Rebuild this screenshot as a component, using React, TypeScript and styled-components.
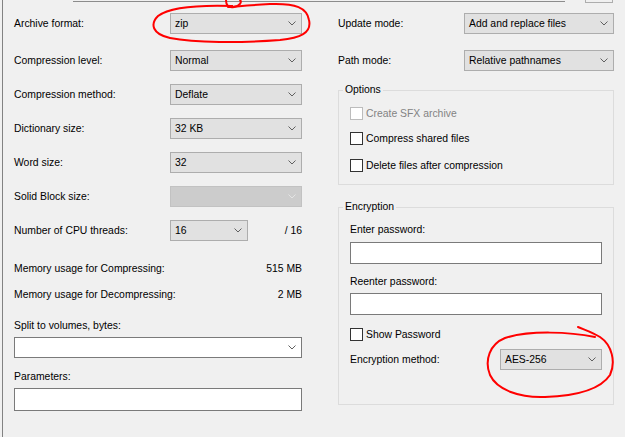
import React from "react";
import styled, { createGlobalStyle } from "styled-components";

const GlobalStyle = createGlobalStyle`
  html, body { margin: 0; padding: 0; background: #f0f0f0; }
  body {
    font-family: "Liberation Sans", Arial, sans-serif;
    font-size: 10.4px;
    color: #000;
  }
  #root { width: 625px; height: 437px; overflow: hidden; }
`;

const Page = styled.div`
  position: relative;
  width: 625px;
  height: 437px;
  overflow: hidden;
  background: #f0f0f0;
`;

const Frame = styled.div`
  margin-left: 2px;
  height: 100%;
  border-left: 1px solid #828282;
  box-sizing: border-box;
`;

const TopStrip = styled.div`
  display: flex;
  height: 3px;
  padding-left: 70px;
`;

const TopLine = styled.div`
  width: 492px;
  height: 0;
  margin-top: 1px;
  border-top: 1px solid #8c8c8c;
`;

const StubButton = styled.div`
  width: 28px;
  height: 3px;
  margin-left: 20px;
  box-sizing: border-box;
  border: 1px solid #adadad;
  border-top: none;
`;

const Columns = styled.div`
  display: flex;
  gap: 36px;
  padding-left: 11px;
`;

const Column = styled.div<{ $w: number }>`
  display: flex;
  flex-direction: column;
  width: ${(p) => p.$w}px;
  flex-shrink: 0;
`;

const Row = styled.div<{ $mt: number; $h?: number }>`
  display: flex;
  align-items: center;
  height: ${(p) => p.$h ?? 21}px;
  margin-top: ${(p) => p.$mt}px;
  white-space: nowrap;
`;

const Label = styled.div<{ $w?: number; $muted?: boolean }>`
  width: ${(p) => (p.$w ? `${p.$w}px` : "auto")};
  flex-shrink: 0;
  color: ${(p) => (p.$muted ? "#838383" : "#000")};
`;

const Spacer = styled.div`
  flex: 1;
`;

type ComboKind = "list" | "edit" | "disabled";

const ComboBox = styled.div<{ $w: number; $h?: number; $kind?: ComboKind }>`
  display: flex;
  align-items: center;
  justify-content: space-between;
  width: ${(p) => p.$w}px;
  height: ${(p) => p.$h ?? 21}px;
  box-sizing: border-box;
  padding: 0 5px 0 4px;
  border: 1px solid
    ${(p) =>
      p.$kind === "edit" ? "#7a7a7a" : p.$kind === "disabled" ? "#c2c2c2" : "#adadad"};
  background: ${(p) =>
    p.$kind === "edit" ? "#ffffff" : p.$kind === "disabled" ? "#cccccc" : "#e1e1e1"};
  flex-shrink: 0;
`;

const TextBox = styled.div<{ $w: number; $h?: number }>`
  width: ${(p) => p.$w}px;
  height: ${(p) => p.$h ?? 22}px;
  box-sizing: border-box;
  border: 1px solid #7a7a7a;
  background: #ffffff;
  flex-shrink: 0;
`;

const Block = styled.div<{ $mt: number }>`
  margin-top: ${(p) => p.$mt}px;
  display: flex;
`;

const CheckBox = styled.div<{ $disabled?: boolean }>`
  width: 13px;
  height: 13px;
  box-sizing: border-box;
  border: 1px solid ${(p) => (p.$disabled ? "#bcbcbc" : "#333333")};
  background: #ffffff;
  margin-right: 3px;
  flex-shrink: 0;
`;

const Group = styled.fieldset<{ $mt: number; $pb: number }>`
  margin: ${(p) => p.$mt}px 0 0 0;
  padding: 0 10px ${(p) => p.$pb}px 11px;
  border: 1px solid #dcdcdc;
  width: 276px;
  box-sizing: border-box;
  min-width: 0;
  display: flex;
  flex-direction: column;
`;

const Legend = styled.legend`
  padding: 0 2px;
  margin-left: -7px;
  line-height: 14px;
  height: 14px;
`;

const Annotation = styled.svg`
  position: absolute;
  left: 0;
  top: 0;
  pointer-events: none;
`;

const Chevron: React.FC<{ color?: string }> = ({ color = "#606060" }) => (
  <svg width="8" height="5" viewBox="0 0 8 5">
    <polyline points="0.5,0.5 4,4 7.5,0.5" fill="none" stroke={color} strokeWidth="1" />
  </svg>
);

const Combo: React.FC<{ w: number; h?: number; kind?: ComboKind; value?: string }> = ({
  w,
  h,
  kind = "list",
  value,
}) => (
  <ComboBox $w={w} $h={h} $kind={kind}>
    <span>{value ?? ""}</span>
    <Chevron color={kind === "disabled" ? "#e4e4e4" : "#606060"} />
  </ComboBox>
);

const Check: React.FC<{ label: string; disabled?: boolean; mt: number }> = ({
  label,
  disabled,
  mt,
}) => (
  <Row $mt={mt} $h={13}>
    <CheckBox $disabled={disabled} />
    <Label $muted={disabled}>{label}</Label>
  </Row>
);

export default function App() {
  return (
    <Page>
      <GlobalStyle />
      <Frame>
        <TopStrip>
          <TopLine />
          <StubButton />
        </TopStrip>
        <Columns>
          <Column $w={288}>
            <Row $mt={10}>
              <Label $w={156}>Archive format:</Label>
              <Combo w={132} value="zip" />
            </Row>
            <Row $mt={16}>
              <Label $w={156}>Compression level:</Label>
              <Combo w={132} value="Normal" />
            </Row>
            <Row $mt={13}>
              <Label $w={156}>Compression method:</Label>
              <Combo w={132} value="Deflate" />
            </Row>
            <Row $mt={13}>
              <Label $w={156}>Dictionary size:</Label>
              <Combo w={132} value="32 KB" />
            </Row>
            <Row $mt={13}>
              <Label $w={156}>Word size:</Label>
              <Combo w={132} value="32" />
            </Row>
            <Row $mt={13}>
              <Label $w={156}>Solid Block size:</Label>
              <Combo w={132} kind="disabled" />
            </Row>
            <Row $mt={13}>
              <Label $w={156}>Number of CPU threads:</Label>
              <Combo w={78} value="16" />
              <Spacer />
              <Label>/ 16</Label>
            </Row>
            <Row $mt={19} $h={16}>
              <Label>Memory usage for Compressing:</Label>
              <Spacer />
              <Label>515 MB</Label>
            </Row>
            <Row $mt={10} $h={16}>
              <Label>Memory usage for Decompressing:</Label>
              <Spacer />
              <Label>2 MB</Label>
            </Row>
            <Row $mt={15} $h={16}>
              <Label>Split to volumes, bytes:</Label>
            </Row>
            <Block $mt={4}>
              <Combo w={288} kind="edit" />
            </Block>
            <Row $mt={10} $h={16}>
              <Label>Parameters:</Label>
            </Row>
            <Block $mt={4}>
              <TextBox $w={288} $h={23} />
            </Block>
          </Column>

          <Column $w={276}>
            <Row $mt={10}>
              <Label $w={126}>Update mode:</Label>
              <Combo w={150} value="Add and replace files" />
            </Row>
            <Row $mt={16}>
              <Label $w={126}>Path mode:</Label>
              <Combo w={150} value="Relative pathnames" />
            </Row>

            <Group $mt={12} $pb={12}>
              <Legend>Options</Legend>
              <Check mt={10} label="Create SFX archive" disabled />
              <Check mt={12} label="Compress shared files" />
              <Check mt={14} label="Delete files after compression" />
            </Group>

            <Group $mt={15} $pb={34}>
              <Legend>Encryption</Legend>
              <Row $mt={8} $h={14}>
                <Label>Enter password:</Label>
              </Row>
              <Block $mt={6}>
                <TextBox $w={252} />
              </Block>
              <Row $mt={10} $h={14}>
                <Label>Reenter password:</Label>
              </Row>
              <Block $mt={5}>
                <TextBox $w={252} />
              </Block>
              <Check mt={13} label="Show Password" />
              <Row $mt={8}>
                <Label $w={150}>Encryption method:</Label>
                <Combo w={102} value="AES-256" />
              </Row>
            </Group>
          </Column>
        </Columns>
      </Frame>

      <Annotation width="625" height="437" viewBox="0 0 625 437">
        <g fill="none" stroke="#ff0000" strokeWidth="2" strokeLinecap="round" strokeLinejoin="round">
          <path d="M 232 6 C 200 5, 170 7, 158 16 C 150 24, 152 34, 170 38 C 195 43, 240 43, 280 40 C 300 38, 312 33, 309 20 C 307 8, 296 3, 270 4 C 255 5, 240 6, 228 7" />
          <path d="M 226 0 C 226 5, 228 8, 234 7 C 240 6, 242 2, 240 0" />
          <path d="M 595 337 C 570 332, 530 330, 505 338 C 490 344, 484 360, 490 375 C 497 390, 520 398, 545 397 C 575 396, 600 390, 610 375 C 616 362, 612 345, 600 337 C 592 332, 585 330, 578 327" />
        </g>
      </Annotation>
    </Page>
  );
}
